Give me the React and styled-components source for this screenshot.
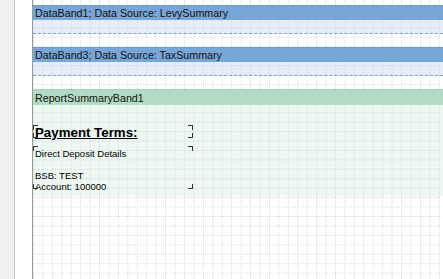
import React from 'react';
import styled, { createGlobalStyle, css } from 'styled-components';

const GlobalStyle = createGlobalStyle`
  html, body {
    margin: 0;
    padding: 0;
    height: 100%;
    overflow: hidden;
    background: #ffffff;
    font-family: "Liberation Sans", Arial, sans-serif;
  }
  #root {
    height: 100%;
  }
`;

const Workspace = styled.div`
  display: flex;
  height: 100vh;
  width: 100vw;
`;

const Gutter = styled.div`
  width: 14px;
  background: #f0f0f0;
  border-right: 1px solid #c9c9c9;
`;

const Margin = styled.div`
  width: 17px;
  background: #ffffff;
  border-right: 1px solid #9a9a9a;
`;

// dotted design grid, one dot every 2px along each line
const Page = styled.div`
  flex: 1;
  display: flex;
  flex-direction: column;
  padding-top: 5px;
  background-color: #ffffff;
  background-image:
    conic-gradient(at 1px 1px, transparent 75%, rgba(0, 0, 0, 0.14) 0),
    conic-gradient(at 1px 1px, transparent 75%, rgba(0, 0, 0, 0.14) 0);
  background-size: 9.45px 2px, 2px 9.45px;
  background-position: 0 0, 0 -1px;
`;

const Caption = styled.div`
  height: ${(p) => p.$h}px;
  box-sizing: border-box;
  padding-left: 2px;
  display: flex;
  align-items: center;
  font-size: 10.7px;
  color: #111;
  background: ${(p) => (p.$tone === 'green' ? '#b1dcc3' : '#78a6d6')};
  border-top: 1px solid ${(p) => (p.$tone === 'green' ? '#a6d3b9' : '#6d9bcc')};
`;

const Fill = styled.div`
  height: 13px;
  background: rgba(190, 210, 238, 0.4);
  border-bottom: 1px dashed #7aa8dc;
`;

const Rest = styled.div`
  height: 13px;
`;

const SummaryBody = styled.div`
  height: 91px;
  box-sizing: border-box;
  padding-top: 20px;
  background: rgba(200, 232, 212, 0.3);
  display: flex;
  flex-direction: column;
  gap: 8px;
`;

const TextObject = styled.div`
  position: relative;
  width: 160px;
  height: ${(p) => p.$h}px;
  box-sizing: border-box;
  padding-left: 2px;
  color: #000;
`;

const corner = {
  tl: css`top: 0; left: 0; border-top: 1px solid; border-left: 1px solid;`,
  tr: css`top: 0; right: 0; border-top: 1px solid; border-right: 1px solid;`,
  bl: css`bottom: 0; left: 0; border-bottom: 1px solid; border-left: 1px solid;`,
  br: css`bottom: 0; right: 0; border-bottom: 1px solid; border-right: 1px solid;`,
};

const Marker = styled.span`
  position: absolute;
  width: 4px;
  height: 4px;
  color: #333;
  ${(p) => corner[p.$at]}
`;

const Title = styled.div`
  font-size: 13.3px;
  font-weight: bold;
  text-decoration: underline;
  line-height: 15px;
`;

const Lines = styled.div`
  font-size: 9.5px;
  line-height: 11px;
  padding-top: 2px;
`;

const Corners = () => (
  <>
    <Marker $at="tl" />
    <Marker $at="tr" />
    <Marker $at="bl" />
    <Marker $at="br" />
  </>
);

const DataBand = ({ title }) => (
  <>
    <Caption $h={15}>{title}</Caption>
    <Fill />
    <Rest />
  </>
);

export default function App() {
  return (
    <>
      <GlobalStyle />
      <Workspace>
        <Gutter />
        <Margin />
        <Page>
          <DataBand title="DataBand1; Data Source: LevySummary" />
          <DataBand title="DataBand3; Data Source: TaxSummary" />
          <Caption $h={16} $tone="green">ReportSummaryBand1</Caption>
          <SummaryBody>
            <TextObject $h={13}>
              <Corners />
              <Title>Payment Terms:</Title>
            </TextObject>
            <TextObject $h={43}>
              <Corners />
              <Lines>
                Direct Deposit Details
                <br />
                <br />
                BSB: TEST
                <br />
                Account: 100000
              </Lines>
            </TextObject>
          </SummaryBody>
        </Page>
      </Workspace>
    </>
  );
}
